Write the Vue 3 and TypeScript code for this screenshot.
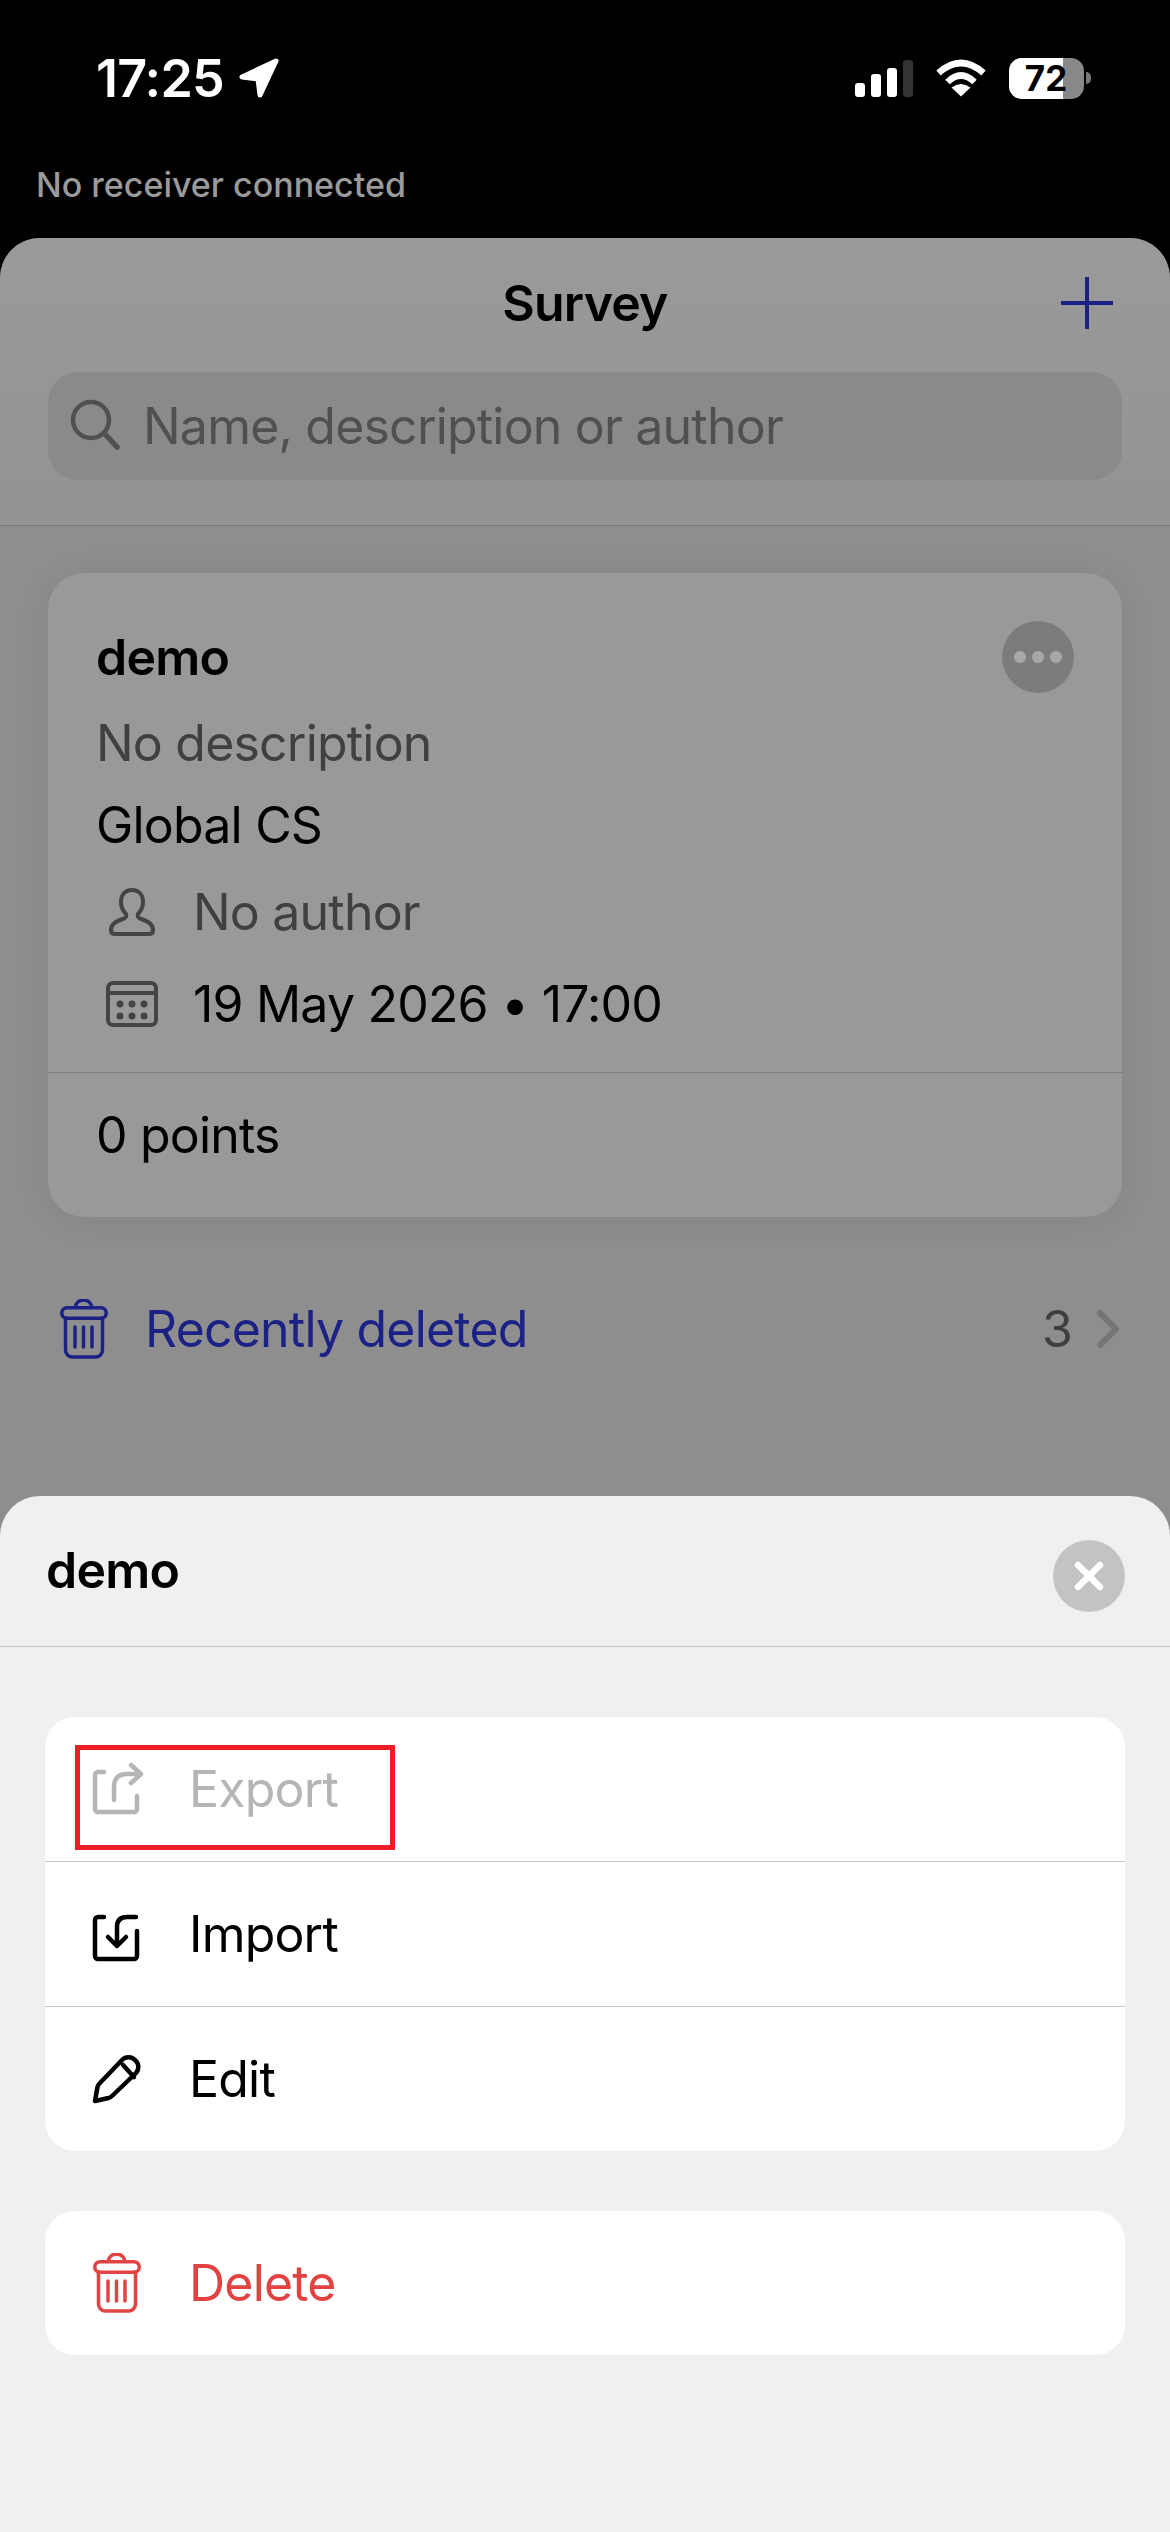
<script setup lang="ts">
const signalBars = ["b1", "b2", "b3", "b4"];
const calendarDots = [
  [16, 25], [28, 25], [40, 25],
  [16, 37], [28, 37], [40, 37],
];
</script>

<template>
  <div class="phone">
    <!-- Status bar -->
    <header class="status-bar">
      <div class="clock">
        <span>17:25</span>
        <svg class="location" width="44" height="44" viewBox="0 0 44 44">
          <path d="M39 5 L5 21 L21 23 L23 39 Z" fill="#fff" stroke="#fff" stroke-width="5" stroke-linejoin="round" />
        </svg>
      </div>
      <div class="status-icons">
        <div class="signal">
          <i v-for="bar in signalBars" :key="bar" :class="bar"></i>
        </div>
        <svg class="wifi" width="52" height="40" viewBox="0 0 52 40">
          <path d="M3.5 15 Q26 -5 48.5 15" fill="none" stroke="#fff" stroke-width="6.5" />
          <path d="M12.5 24 Q26 11 39.5 24" fill="none" stroke="#fff" stroke-width="6.5" />
          <path d="M26 38.5 L16.5 29.5 Q26 22.5 35.5 29.5 Z" fill="#fff" />
        </svg>
        <div class="battery">
          <div class="battery-fill"></div>
          <span class="battery-level">72</span>
        </div>
        <div class="battery-nub"></div>
      </div>
    </header>
    <div class="receiver">No receiver connected</div>

    <!-- Survey list -->
    <main class="survey">
      <div class="survey-head">
        <div class="title-row">
          <span></span>
          <h1 class="title">Survey</h1>
          <svg class="plus" width="52" height="52" viewBox="0 0 52 52">
            <path d="M26 0 V52 M0 26 H52" stroke="#1c2185" stroke-width="4" stroke-linecap="round" />
          </svg>
        </div>
        <div class="search">
          <svg width="52" height="56" viewBox="0 0 52 56">
            <circle cx="22" cy="22" r="18" fill="none" stroke="#505050" stroke-width="4.5" />
            <path d="M35 35 L48 49" stroke="#505050" stroke-width="5.5" stroke-linecap="round" />
          </svg>
          <span>Name, description or author</span>
        </div>
      </div>

      <section class="card">
        <div class="card-main">
          <div class="card-name-row">
            <span class="card-name">demo</span>
            <div class="more"><i></i><i></i><i></i></div>
          </div>
          <div class="line muted">No description</div>
          <div class="line">Global CS</div>
          <div class="meta meta-author">
            <svg width="56" height="56" viewBox="-1 0 56 56">
              <path d="M27 6 c-7 0 -11 5 -11 12 c0 5 2 9 5 12 c1 2 0 4 -3 5 c-7 2 -12 5 -12 11 c0 3 2 4 4 4 h34 c2 0 4 -1 4 -4 c0 -6 -5 -9 -12 -11 c-3 -1 -4 -3 -3 -5 c3 -3 5 -7 5 -12 c0 -7 -4 -12 -11 -12 Z" fill="none" stroke="#444" stroke-width="4" />
            </svg>
            <span class="muted">No author</span>
          </div>
          <div class="meta meta-date">
            <svg width="56" height="50" viewBox="0 0 56 50">
              <rect x="4" y="4" width="48" height="42" rx="5" fill="none" stroke="#444" stroke-width="4" />
              <path d="M4 14 H52" stroke="#444" stroke-width="4" />
              <circle v-for="(dot, i) in calendarDots" :key="i" :cx="dot[0]" :cy="dot[1]" r="3.5" fill="#444" />
            </svg>
            <span>19 May 2026 • 17:00</span>
          </div>
        </div>
        <div class="card-foot">0 points</div>
      </section>

      <div class="deleted">
        <svg width="48" height="60" viewBox="0 0 48 60" fill="none" stroke="currentColor" stroke-width="3.5" stroke-linecap="round">
          <path d="M15.5 8 a8 7 0 0 1 16 0" />
          <rect x="1.75" y="8.75" width="44.5" height="10.5" rx="5.25" />
          <path d="M5.5 19 V51 a7 7 0 0 0 7 7 H35.5 a7 7 0 0 0 7 -7 V19" />
          <path d="M15 28 V48 M23.5 28 V48 M32 28 V48" />
        </svg>
        <span class="deleted-label">Recently deleted</span>
        <span class="deleted-count">3</span>
        <svg width="24" height="40" viewBox="0 0 24 40">
          <path d="M4 4 L20 20 L4 36" fill="none" stroke="#757575" stroke-width="6" stroke-linecap="round" stroke-linejoin="round" />
        </svg>
      </div>
    </main>

    <!-- Action sheet -->
    <aside class="sheet">
      <div class="sheet-head">
        <span class="sheet-title">demo</span>
        <div class="close">
          <svg width="30" height="30" viewBox="0 0 30 30">
            <path d="M4 4 L26 26 M26 4 L4 26" stroke="#fff" stroke-width="6.5" stroke-linecap="round" />
          </svg>
        </div>
      </div>

      <div class="group">
        <div class="action disabled">
          <svg width="56" height="56" viewBox="0 0 56 56" fill="none" stroke="currentColor" stroke-width="4.5" stroke-linecap="round" stroke-linejoin="round">
            <path d="M14 11 H8 a3 3 0 0 0 -3 3 V48 a3 3 0 0 0 3 3 H44 a3 3 0 0 0 3 -3 V35" />
            <path d="M24 39 V26 q0 -13 13 -13 H50" />
            <path d="M41 4 L51 13 L41 22" />
          </svg>
          <span>Export</span>
          <div class="highlight"></div>
        </div>
        <div class="action">
          <svg width="56" height="56" viewBox="0 0 56 56" fill="none" stroke="currentColor" stroke-width="4.5" stroke-linecap="round" stroke-linejoin="round">
            <path d="M14 11 H8 a3 3 0 0 0 -3 3 V50 a3 3 0 0 0 3 3 H44 a3 3 0 0 0 3 -3 V25" />
            <path d="M46 11 H37 q-10 0 -10 10 V39" />
            <path d="M18 31 L27 40 L36 31" />
          </svg>
          <span>Import</span>
        </div>
        <div class="action">
          <svg width="56" height="56" viewBox="0 0 56 56" fill="none" stroke="currentColor" stroke-width="4.5" stroke-linecap="round" stroke-linejoin="round">
            <path d="M5 50 L7.5 36 q.5 -2 2 -3.5 L32 9 a9 9 0 0 1 13 0 a9 9 0 0 1 1 13 L22 45 q-1.5 1.5 -3.5 2 Z" />
            <path d="M33 14 L44 26" />
          </svg>
          <span>Edit</span>
        </div>
      </div>

      <div class="group">
        <div class="action danger">
          <svg width="56" height="60" viewBox="-3 0 56 60" fill="none" stroke="currentColor" stroke-width="3.5" stroke-linecap="round">
            <path d="M15.5 8 a8 7 0 0 1 16 0" />
            <rect x="1.75" y="8.75" width="44.5" height="10.5" rx="5.25" />
            <path d="M5.5 19 V51 a7 7 0 0 0 7 7 H35.5 a7 7 0 0 0 7 -7 V19" />
            <path d="M15 28 V48 M23.5 28 V48 M32 28 V48" />
          </svg>
          <span>Delete</span>
        </div>
      </div>
    </aside>
  </div>
</template>

<style scoped>
.phone {
  position: relative;
  width: 1170px;
  height: 2532px;
  overflow: hidden;
  display: flex;
  flex-direction: column;
  background: #000;
  font-family: Inter, "Liberation Sans", sans-serif;
  font-size: 50px;
  letter-spacing: -0.8px;
  color: #000;
}

.status-bar {
  height: 156px;
  padding: 0 79px 0 96px;
  display: flex;
  align-items: center;
  justify-content: space-between;
  color: #fff;
}

.clock {
  display: flex;
  align-items: center;
  gap: 13px;
  font-size: 52px;
  font-weight: 600;
  letter-spacing: -0.8px;
}

.status-icons {
  display: flex;
  align-items: center;
}

.signal {
  display: flex;
  align-items: flex-end;
  gap: 6px;
  height: 37px;
  margin-right: 22px;
}

.signal i {
  width: 10px;
  border-radius: 3px;
  background: #fff;
}

.signal .b1 { height: 14px; }
.signal .b2 { height: 23px; }
.signal .b3 { height: 29px; }
.signal .b4 { height: 37px; background: #333; }

.battery {
  position: relative;
  width: 75px;
  height: 41px;
  margin-left: 22px;
  border-radius: 13px;
  overflow: hidden;
  background: #888;
  display: flex;
  align-items: center;
  justify-content: center;
}

.battery-fill {
  position: absolute;
  left: 0;
  top: 0;
  bottom: 0;
  width: 54px;
  background: #fff;
}

.battery-level {
  position: relative;
  margin-right: 1px;
  font-size: 35px;
  font-weight: 700;
  letter-spacing: 0;
  color: #000;
}

.battery-nub {
  width: 5px;
  height: 12px;
  margin-left: 2px;
  border-radius: 0 6px 6px 0;
  background: #777;
}

.receiver {
  height: 82px;
  padding: 8px 0 0 36px;
  box-sizing: border-box;
  font-size: 34px;
  line-height: 42px;
  font-weight: 500;
  letter-spacing: 0;
  color: #9a9a9a;
}

.survey {
  flex: 1;
  border-radius: 40px 40px 0 0;
  overflow: hidden;
  background: #8e8e8e;
}

.survey-head {
  height: 287px;
  padding: 0 48px;
  border-bottom: 1px solid #777;
  background: linear-gradient(#9a9a9a, #939393);
}

.title-row {
  display: grid;
  grid-template-columns: 1fr auto 1fr;
  align-items: center;
  height: 130px;
  margin-bottom: 4px;
}

.title {
  margin: 0;
  font-size: 50px;
  font-weight: 600;
  line-height: 60px;
}

.plus {
  justify-self: end;
  margin-right: 9px;
}

.search {
  height: 108px;
  padding-left: 21px;
  display: flex;
  align-items: center;
  gap: 22px;
  border-radius: 30px;
  background: #8a8a8a;
  color: #505050;
}

.card {
  margin: 47px 48px 0;
  border-radius: 36px;
  background: #999;
  box-shadow: 0 4px 36px rgba(0, 0, 0, 0.07);
}

.card-main {
  height: 500px;
  padding: 48px 48px 0;
  box-sizing: border-box;
  border-bottom: 1px solid #7f7f7f;
}

.card-name-row {
  height: 72px;
  display: flex;
  align-items: center;
  justify-content: space-between;
}

.card-name {
  font-weight: 600;
}

.more {
  width: 72px;
  height: 72px;
  border-radius: 50%;
  display: flex;
  align-items: center;
  justify-content: center;
  gap: 6px;
  background: #7c7c7c;
}

.more i {
  width: 12px;
  height: 12px;
  border-radius: 50%;
  background: #a8a8a8;
}

.line {
  height: 80px;
  line-height: 80px;
}

.card-name-row + .line {
  margin-top: 10px;
}

.line + .line {
  margin-top: 2px;
}

.muted {
  color: #404040;
}

.meta {
  height: 70px;
  padding-left: 8px;
  display: flex;
  align-items: center;
  gap: 33px;
}

.meta-author {
  margin-top: 12px;
}

.meta-date {
  margin-top: 22px;
}

.card-foot {
  height: 144px;
  padding-left: 48px;
  line-height: 124px;
}

.deleted {
  height: 80px;
  margin-top: 72px;
  padding: 0 50px 0 60px;
  display: flex;
  align-items: center;
  color: #1c2185;
}

.deleted-label {
  flex: 1;
  margin-left: 37px;
}

.deleted-count {
  margin-right: 24px;
  color: #3f3f3f;
}

.sheet {
  position: absolute;
  left: 0;
  right: 0;
  top: 1496px;
  bottom: 0;
  border-radius: 40px 40px 0 0;
  background: #f0f0f0;
}

.sheet-head {
  height: 151px;
  padding: 0 45px 2px 46px;
  box-sizing: border-box;
  display: flex;
  align-items: center;
  justify-content: space-between;
  border-bottom: 1px solid #c6c6c6;
}

.sheet-title {
  font-weight: 600;
}

.close {
  width: 72px;
  height: 72px;
  margin-top: 12px;
  border-radius: 50%;
  display: flex;
  align-items: center;
  justify-content: center;
  background: #c3c3c3;
}

.group {
  margin: 70px 45px 0;
  border-radius: 30px;
  background: #fff;
}

.group + .group {
  margin-top: 60px;
}

.action {
  position: relative;
  height: 145px;
  padding-left: 45px;
  box-sizing: border-box;
  display: flex;
  align-items: center;
  gap: 43px;
}

.action:first-child {
  height: 144px;
}

.action + .action {
  border-top: 1px solid #c6c6c6;
}

.disabled {
  color: #b5b5b5;
}

.danger {
  color: #e34242;
}

.highlight {
  position: absolute;
  left: 30px;
  top: 28px;
  width: 320px;
  height: 105px;
  box-sizing: border-box;
  border: 5px solid #ee1c25;
}
</style>

<style>
html,
body {
  background: #000;
}
</style>
